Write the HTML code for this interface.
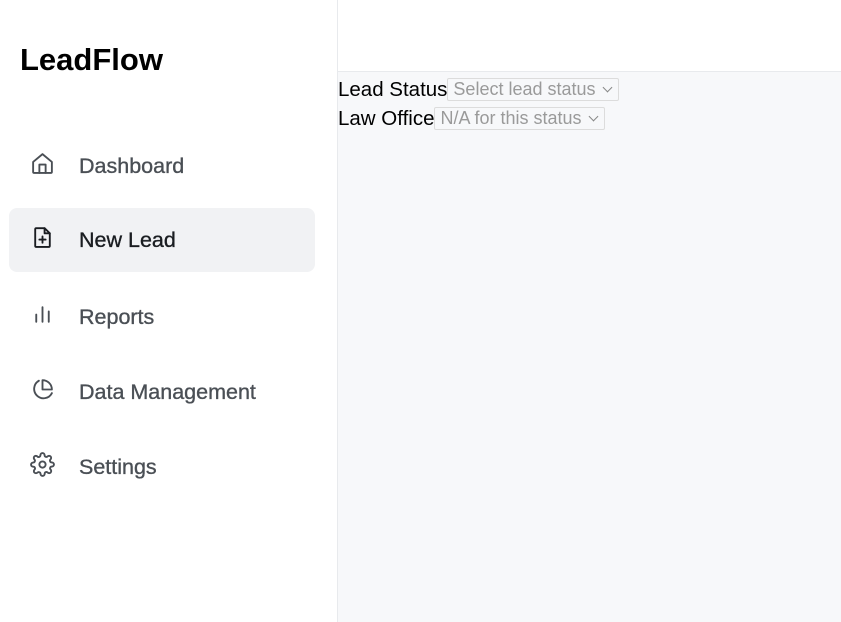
<!DOCTYPE html>
<html><head><style>
*{margin:0;padding:0;box-sizing:border-box}
body{width:841px;height:622px;font-family:"Liberation Sans",sans-serif;background:#fff;position:relative;overflow:hidden}
.side{position:absolute;left:0;top:0;width:338px;height:622px;border-right:1px solid #e8eaed;background:#fff}
.logo{position:absolute;left:20px;top:42px;font-size:31px;font-weight:bold;color:#000;letter-spacing:0}
.item{position:absolute;left:9px;width:306px;height:64px;border-radius:8px;display:flex;align-items:center;font-size:21.5px;color:#4a4f55;-webkit-text-stroke:0.35px #4a4f55}
.item svg{position:absolute;left:21px;top:50%;transform:translateY(-60%);width:25px;height:25px;fill:none;stroke:#4a4f55;stroke-width:1.8;stroke-linecap:round;stroke-linejoin:round}
.item span{position:absolute;left:70px}
.active{background:#f1f2f4;color:#1a1d21;-webkit-text-stroke:0.35px #1a1d21}
.active svg{stroke:#1a1d21}
.head{position:absolute;left:338px;top:0;right:0;height:72px;border-bottom:1px solid #e8eaed;background:#fff}
.main{position:absolute;left:338px;top:72px;right:0;bottom:0;background:#f7f8fa}
.row{height:29px;display:flex;align-items:center;font-size:20.5px;color:#000;white-space:nowrap}
.sel{border:1px solid #dcdcdc;border-radius:2px;height:23px;font-size:18px;color:#9a9a9a;display:flex;align-items:center;padding:0 4px 0 5px;background:#f7f8fa}
.sel i{display:inline-block;width:7px;height:7px;border-right:1.5px solid #888;border-bottom:1.5px solid #888;transform:rotate(45deg);margin:-4px 3px 0 8px}
</style></head><body>
<div class="side">
<div class="logo">LeadFlow</div>
<div class="item" style="top:134px"><svg viewBox="0 0 24 24"><path d="M3 10.5L12 3l9 7.5V20a1 1 0 0 1-1 1H4a1 1 0 0 1-1-1z"/><path d="M9 21v-8h6v8"/></svg><span>Dashboard</span></div>
<div class="item active" style="top:208px"><svg viewBox="0 0 24 24"><path d="M14 3H6a1 1 0 0 0-1 1v16a1 1 0 0 0 1 1h12a1 1 0 0 0 1-1V8z"/><path d="M14 3v5h5"/><path d="M12 11v6M9 14h6"/></svg><span>New Lead</span></div>
<div class="item" style="top:285px"><svg viewBox="0 0 24 24"><path d="M6 12v7M12 5v14M18 9v10"/></svg><span>Reports</span></div>
<div class="item" style="top:360px"><svg viewBox="0 0 24 24"><path d="M21 15.5A9 9 0 1 1 8.5 3.6"/><path d="M12 3a9 9 0 0 1 9 9h-9z"/></svg><span>Data Management</span></div>
<div class="item" style="top:435px"><svg viewBox="0 0 24 24"><circle cx="12" cy="12" r="3"/><path d="M19.4 15a1.65 1.65 0 0 0 .33 1.82l.06.06a2 2 0 1 1-2.830 2.83l-.06-.06a1.65 1.65 0 0 0-1.82-.33 1.65 1.65 0 0 0-1 1.51V21a2 2 0 1 1-4 0v-.09A1.65 1.65 0 0 0 9 19.4a1.650 1.65 0 0 0-1.82.33l-.06.06a2 2 0 1 1-2.83-2.83l.06-.06a1.65 1.65 0 0 0 .33-1.82 1.65 1.65 0 0 0-1.51-1H3a2 2 0 1 1 0-4h.09A1.65 1.65 0 0 0 4.6 9a1.65 1.65 0 0 0-.33-1.82l-.06-.06a2 2 0 1 1 2.83-2.83l.06.06a1.65 1.65 0 0 0 1.82.33H9a1.65 1.65 0 0 0 1-1.51V3a2 2 0 1 1 4 0v.09a1.65 1.65 0 0 0 1 1.51 1.65 1.65 0 0 0 1.82-.33l.06-.06a2 2 0 1 1 2.83 2.83l-.06.06a1.65 1.65 0 0 0-.33 1.82V9a1.65 1.65 0 0 0 1.51 1H21a2 2 0 1 1 0 4h-.09a1.65 1.65 0 0 0-1.51 1z"/></svg><span>Settings</span></div>
</div>
<div class="head"></div>
<div class="main">
<div style="padding-top:3px">
<div class="row">Lead Status<div class="sel">Select lead status<i></i></div></div>
<div class="row">Law Office<div class="sel">N/A for this status<i></i></div></div>
</div>
</div>
</body></html>
